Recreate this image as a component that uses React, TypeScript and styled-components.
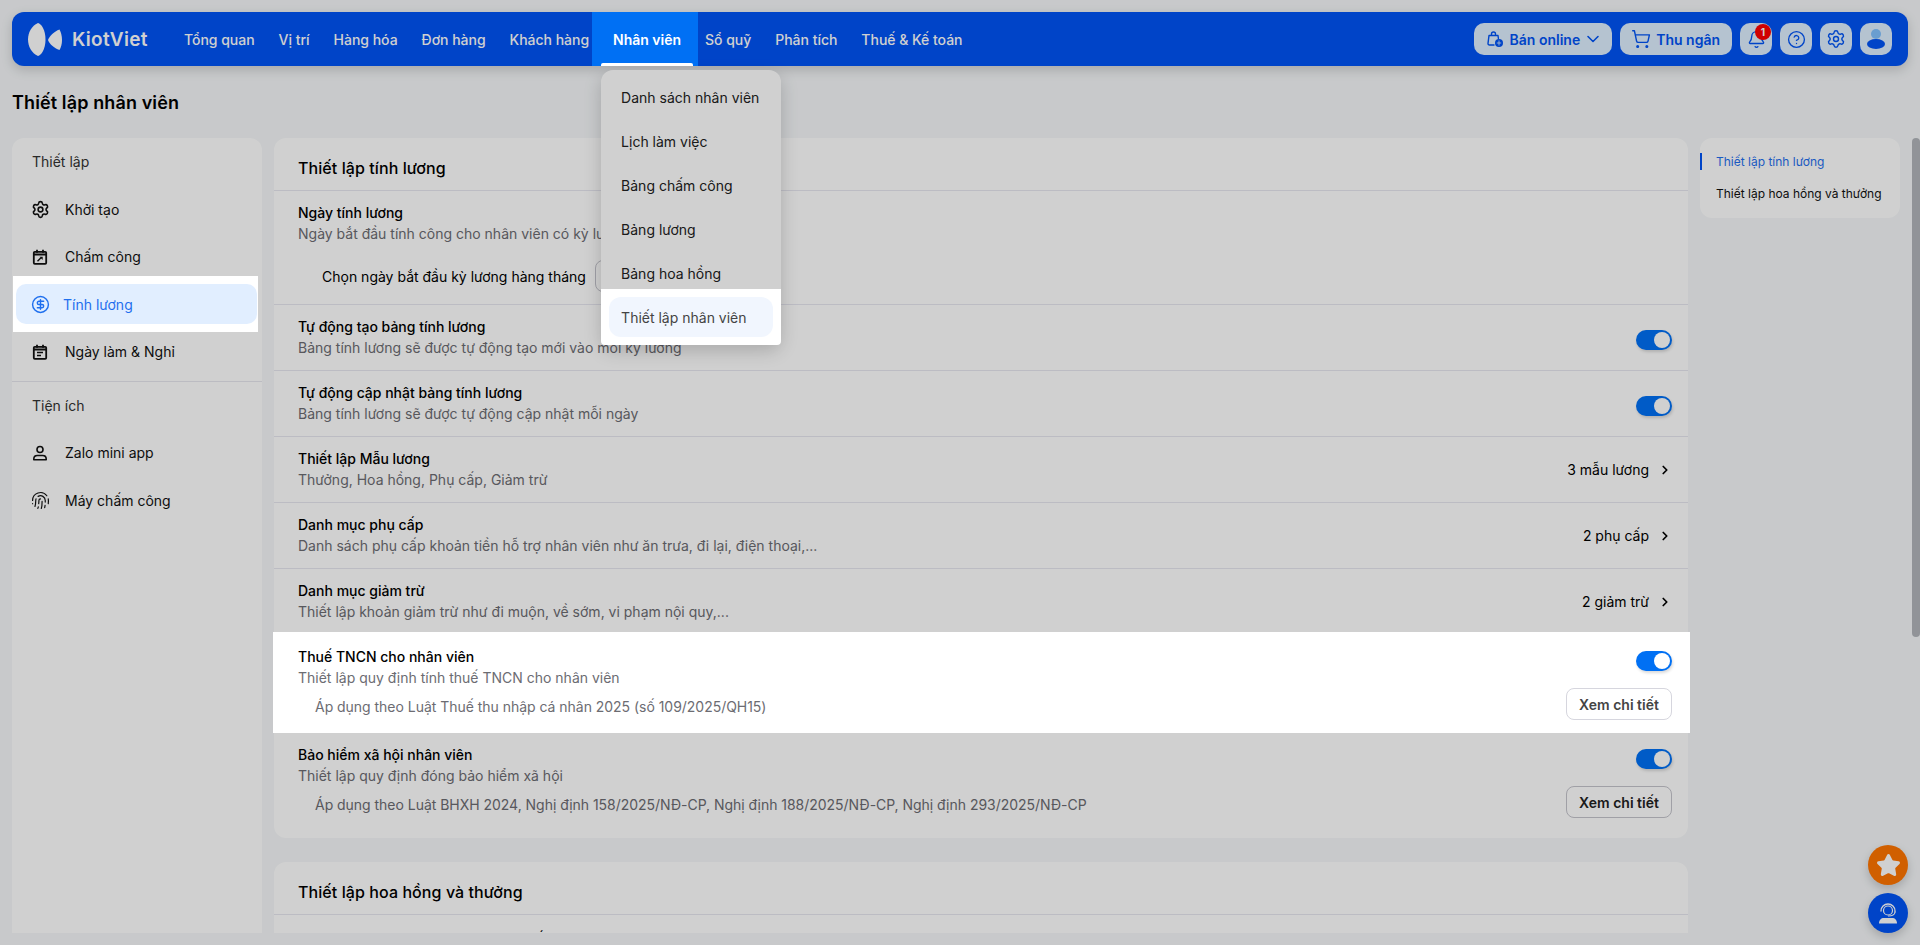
import React from 'react';
import styled, { createGlobalStyle } from 'styled-components';
import {
  Bell,
  ChevronDown,
  ChevronRight,
  CircleDollarSign,
  CircleHelp,
  Fingerprint,
  Settings,
  ShoppingCart,
  Star,
} from 'lucide-react';

const GlobalStyle = createGlobalStyle`
  html, body {
    margin: 0;
    height: 100%;
    overflow: hidden;
    background: #f5f7f9;
    color: #000;
    font-family: Inter, "Noto Sans", sans-serif;
    font-size: 14px;
  }
  * { box-sizing: border-box; }
`;

const Page = styled.div`
  height: 945px;
  padding: 12px;
  display: flex;
  flex-direction: column;
`;

const Overlay = styled.div`
  position: fixed;
  inset: 0;
  z-index: 10;
  background: rgba(0, 0, 0, 0.185);
`;

const Header = styled.header`
  height: 54px;
  flex: none;
  display: flex;
  align-items: center;
  padding: 0 16px;
  border-radius: 12px;
  background: #0054f6;
  box-shadow: 0 4px 12px rgba(0, 0, 0, 0.16);
`;

const Logo = styled.div`
  width: 144px;
  flex: none;
  display: flex;
  align-items: center;
  gap: 10px;
`;

const LogoText = styled.span`
  color: #fff;
  font-size: 19px;
  font-weight: 600;
  letter-spacing: 0.3px;
`;

const Nav = styled.nav`
  display: flex;
  height: 100%;
`;

const NavItem = styled.div`
  position: relative;
  display: flex;
`;

const NavLink = styled.a<{ $active?: boolean }>`
  display: flex;
  align-items: center;
  padding: 0 12px;
  color: #fff;
  font-weight: ${(p) => (p.$active ? 600 : 500)};
  font-size: 14px;
  letter-spacing: -0.02px;
  white-space: nowrap;
  ${(p) =>
    p.$active &&
    `
    position: relative;
    z-index: 11;
    &::before {
      content: '';
      position: absolute;
      inset: 0 -5px 0 -9px;
      z-index: -1;
      background: #0070f4;
    }
    &::after {
      content: '';
      position: absolute;
      left: 0;
      right: 0;
      bottom: 0;
      height: 3px;
      border-radius: 2px 2px 0 0;
      background: #fff;
    }
  `}
`;

const Dropdown = styled.div`
  position: absolute;
  top: 58px;
  left: 0;
  width: 180px;
  padding: 7px 8px 8px;
  display: flex;
  flex-direction: column;
  gap: 4px;
  border-radius: 12px;
  background: #fff;
  box-shadow: 0 6px 18px rgba(0, 0, 0, 0.18);
`;

const DropdownItem = styled.a<{ $active?: boolean }>`
  height: 40px;
  display: flex;
  align-items: center;
  padding: 0 12px;
  border-radius: 12px;
  color: #222;
  font-size: 14px;
  white-space: nowrap;
  ${(p) =>
    p.$active &&
    `
    position: relative;
    z-index: 11;
    color: #444;
    &::before {
      content: '';
      position: absolute;
      inset: -8px -8px -8px -8px;
      z-index: -2;
      border-radius: 0 0 4px 4px;
      background: #fff;
    }
    &::after {
      content: '';
      position: absolute;
      inset: 0;
      z-index: -1;
      border-radius: 12px;
      background: #f1f6fe;
    }
  `}
`;

const Actions = styled.div`
  margin-left: auto;
  display: flex;
  gap: 8px;
`;

const ActionButton = styled.button<{ $square?: boolean }>`
  position: relative;
  height: 32px;
  width: ${(p) => (p.$square ? '32px' : 'auto')};
  padding: ${(p) => (p.$square ? '0' : '0 12px')};
  display: flex;
  align-items: center;
  justify-content: center;
  gap: 6px;
  border: 0;
  border-radius: 10px;
  background: #deefff;
  color: #0054f6;
  font: 600 14px Inter, sans-serif;
`;

const ButtonIcon = styled.span<{ $slot: number }>`
  width: ${(p) => p.$slot}px;
  height: 20px;
  flex: none;
  display: flex;
  align-items: center;
  justify-content: center;
`;

const Badge = styled.span`
  position: absolute;
  top: 1px;
  right: 1px;
  width: 16px;
  height: 16px;
  display: flex;
  align-items: center;
  justify-content: center;
  border-radius: 50%;
  background: #ff0000;
  color: #fff;
  font-size: 10px;
  font-weight: 700;
`;

const PageTitle = styled.h1`
  margin: 25px 0 23px;
  height: 24px;
  font-size: 18px;
  line-height: 24px;
  font-weight: 600;
  letter-spacing: 0.12px;
`;

const Content = styled.div`
  flex: 1;
  min-height: 0;
  display: flex;
  gap: 12px;
  padding-right: 8px;
`;

const Sidebar = styled.aside`
  width: 250px;
  flex: none;
  padding-top: 14px;
  border-radius: 12px 12px 0 0;
  background: #fff;
`;

const SideLabel = styled.div`
  padding-left: 20px;
  margin-bottom: 17px;
  line-height: 20px;
  color: #333;
`;

const SideList = styled.div`
  display: flex;
  flex-direction: column;
  gap: 7.6px;
  margin: 0 5px 0 4px;
`;

const SideIcon = styled.span`
  width: 16px;
  height: 16px;
  flex: none;
  display: flex;
  align-items: center;
  justify-content: center;
`;

const SideItem = styled.a<{ $active?: boolean }>`
  height: 40px;
  display: flex;
  align-items: center;
  gap: ${(p) => (p.$active ? '15px' : '17px')};
  padding: 0 16px;
  border-radius: 10px;
  color: #111;
  font-size: 14px;
  ${(p) =>
    p.$active &&
    `
    position: relative;
    z-index: 11;
    color: #1f6fee;
    &::before {
      content: '';
      position: absolute;
      inset: -8px -1px -8px -3px;
      z-index: -2;
      background: #fff;
    }
    &::after {
      content: '';
      position: absolute;
      inset: 0;
      z-index: -1;
      border-radius: 10px;
      background: #e1eeff;
    }
  `}
`;

const SideDivider = styled.div`
  height: 1px;
  margin: 9px 0 14px;
  background: #e7e7ee;
`;

const Column = styled.main`
  flex: 1;
  min-width: 0;
  margin: 0 -2px;
  padding: 0 2px;
  overflow: hidden;
  display: flex;
  flex-direction: column;
  gap: 24px;
`;

const Panel = styled.section`
  flex: none;
  padding-bottom: 8px;
  border-radius: 12px;
  background: #fff;
`;

const PanelTitle = styled.h2`
  margin: 0;
  padding: 20px 24px 12px 24px;
  font-size: 16px;
  line-height: 20px;
  font-weight: 500;
  letter-spacing: 0.08px;
`;

const Row = styled.div<{ $spot?: boolean }>`
  border-top: 1px solid #e7e7f0;
  padding: 12px 16px 12px 24px;
  ${(p) =>
    p.$spot &&
    `
    position: relative;
    z-index: 11;
    &::before {
      content: '';
      position: absolute;
      inset: -3px -2px -1px -1px;
      z-index: -1;
      background: #fff;
    }
  `}
`;

const ClippedRow = styled(Row)`
  padding-top: 14px;
`;

const RowHead = styled.div<{ $top?: boolean }>`
  display: flex;
  justify-content: space-between;
  align-items: ${(p) => (p.$top ? 'flex-start' : 'center')};
`;

const RowTitle = styled.div`
  font-size: 14px;
  font-weight: 500;
  line-height: 20px;
`;

const RowDesc = styled.div`
  margin-top: 1px;
  line-height: 20px;
  color: #6c6c72;
`;

const Switch = styled.span`
  width: 36px;
  height: 20px;
  margin-top: 4px;
  display: flex;
  justify-content: flex-end;
  align-items: center;
  padding-right: 2px;
  border-radius: 10px;
  background: #0070f4;
  box-shadow: 1px 2px 3px rgba(0, 0, 0, 0.15);
  &::after {
    content: '';
    width: 16px;
    height: 16px;
    border-radius: 50%;
    background: #fff;
  }
`;

const RowValue = styled.div`
  display: flex;
  align-items: center;
  gap: 9px;
`;

const NoteRow = styled.div`
  display: flex;
  justify-content: space-between;
  align-items: center;
  height: 32px;
  padding-left: 17px;
  color: #6c6c72;
  letter-spacing: -0.03px;
`;

const NoteText = styled.span`
  padding-top: 5px;
`;

const DetailButton = styled.button<{ $light?: boolean }>`
  width: 106px;
  height: 32px;
  border: 1px solid ${(p) => (p.$light ? '#d6d6de' : '#c4c4cc')};
  border-radius: 8px;
  background: transparent;
  color: ${(p) => (p.$light ? '#444' : '#222')};
  font: 600 14px Inter, sans-serif;
`;

const StartRow = styled.div`
  margin-top: 16px;
  display: flex;
  align-items: center;
  gap: 9px;
  padding-left: 24px;
`;

const SelectBox = styled.div`
  width: 120px;
  height: 32px;
  border: 1px solid #c4c4cc;
  border-radius: 8px;
`;

const Aside = styled.aside`
  width: 200px;
  height: 80px;
  flex: none;
  padding: 14px 0;
  display: flex;
  flex-direction: column;
  gap: 12px;
  border-radius: 12px;
  background: #fff;
`;

const AsideLink = styled.a<{ $active?: boolean }>`
  position: relative;
  padding-left: 16px;
  line-height: 20px;
  font-size: 12px;
  white-space: nowrap;
  color: ${(p) => (p.$active ? '#1f6fee' : '#111')};
  ${(p) =>
    p.$active &&
    `
    &::before {
      content: '';
      position: absolute;
      left: 0;
      top: 1px;
      width: 2px;
      height: 17px;
      background: #0054f6;
    }
  `}
`;

const ScrollThumb = styled.div`
  position: fixed;
  top: 138px;
  right: 0;
  width: 8px;
  height: 499px;
  border-radius: 4px;
  background: #b2b5bb;
`;

const Fabs = styled.div`
  position: fixed;
  right: 12px;
  bottom: 12px;
  display: flex;
  flex-direction: column;
  gap: 8px;
`;

const Fab = styled.div<{ $color: string }>`
  width: 40px;
  height: 40px;
  display: flex;
  align-items: center;
  justify-content: center;
  border-radius: 50%;
  background: ${(p) => p.$color};
  box-shadow: 0 4px 10px rgba(0, 0, 0, 0.18);
`;

const LogoMark = () => (
  <svg width="34" height="33" viewBox="0 0 34 33" fill="#fff">
    <path d="M10 0C3.500 3 0 9.500 0 16.500S3.500 30 10 33c3-.5 7.500-6.500 7.500-16.500S13 .5 10 0Z" />
    <path d="M20 17c1.500-4 6-8.500 11.500-10.500C33 9 34 13 34 17s-1 7.500-2.500 10C26 25 21.500 21 20 17Z" />
  </svg>
);

const BagIcon = () => (
  <svg width="18" height="18" viewBox="0 0 18 18" fill="none" stroke="currentColor" strokeWidth="1.4">
    <path d="M8 15H3.500a1.500 1.500 0 0 1-1.500-1.700L3 5.500h9l.4 3" strokeLinecap="round" strokeLinejoin="round" />
    <path d="M5.500 5.500V4a2 2 0 0 1 4 0v1.500" />
    <circle cx="13" cy="13" r="4" fill="currentColor" stroke="none" />
    <path d="M13 10.500v5M10.800 13h4.400" stroke="#deefff" strokeWidth="0.8" />
  </svg>
);

const CalendarEditIcon = () => (
  <svg width="16" height="16" viewBox="0 0 16 16" fill="none" stroke="currentColor" strokeWidth="1.8">
    <rect x="1.800" y="2.800" width="12.400" height="12" rx="1" />
    <path d="M1.800 5.500h12.400" strokeWidth="2" />
    <path d="M5 .8v3M11 .8v3" />
    <path d="M5.500 12.200l3.500-3.500" strokeWidth="1.500" />
    <path d="M7.500 7.700h3.200v3.200z" fill="currentColor" stroke="none" />
  </svg>
);

const CalendarListIcon = () => (
  <svg width="16" height="16" viewBox="0 0 16 16" fill="none" stroke="currentColor" strokeWidth="1.8">
    <rect x="1.800" y="2.800" width="12.400" height="12" rx="1" />
    <path d="M1.800 5.500h12.400" strokeWidth="2" />
    <path d="M5 .8v3M11 .8v3" />
    <path d="M5 8.500h6M5 11.500h4" strokeWidth="1.300" />
  </svg>
);

const PersonIcon = () => (
  <svg width="16" height="16" viewBox="0 0 16 16" fill="none" stroke="currentColor" strokeWidth="1.6">
    <circle cx="8" cy="4.500" r="3" />
    <path d="M1.800 14.800v-.8c0-2 1.500-3.500 3.500-3.500h5.400c2 0 3.500 1.500 3.500 3.500v.8z" strokeLinejoin="round" />
  </svg>
);

const AvatarIcon = () => (
  <svg width="24" height="24" viewBox="0 0 24 24">
    <circle cx="12" cy="7" r="5" fill="#82c2ff" />
    <ellipse cx="12" cy="17" rx="9" ry="5" fill="#0054f6" />
  </svg>
);

const HeadsetIcon = () => (
  <svg width="24" height="24" viewBox="0 0 24 24" fill="none" stroke="#fff" strokeLinecap="round">
    <path d="M5 10a7 7 0 0 1 14 0v1" strokeWidth="1.300" />
    <circle cx="12" cy="9.500" r="4.500" strokeWidth="1.200" />
    <path d="M19 11c0 2.500-3 4-6.500 4" strokeWidth="1.100" />
    <path d="M3 22.500c0-3.500 2-5.500 5-5.500h8c3 0 5 2 5 5.500z" fill="#fff" stroke="none" />
  </svg>
);

const navItems = ['Tổng quan', 'Vị trí', 'Hàng hóa', 'Đơn hàng', 'Khách hàng', 'Nhân viên', 'Sổ quỹ', 'Phân tích', 'Thuế & Kế toán'];
const menuItems = ['Danh sách nhân viên', 'Lịch làm việc', 'Bảng chấm công', 'Bảng lương', 'Bảng hoa hồng'];

const simpleRows: { title: string; desc: string; value?: string }[] = [
  { title: 'Tự động tạo bảng tính lương', desc: 'Bảng tính lương sẽ được tự động tạo mới vào mỗi kỳ lương' },
  { title: 'Tự động cập nhật bảng tính lương', desc: 'Bảng tính lương sẽ được tự động cập nhật mỗi ngày' },
  { title: 'Thiết lập Mẫu lương', desc: 'Thưởng, Hoa hồng, Phụ cấp, Giảm trừ', value: '3 mẫu lương' },
  { title: 'Danh mục phụ cấp', desc: 'Danh sách phụ cấp khoản tiền hỗ trợ nhân viên như ăn trưa, đi lại, điện thoại,...', value: '2 phụ cấp' },
  { title: 'Danh mục giảm trừ', desc: 'Thiết lập khoản giảm trừ như đi muộn, về sớm, vi phạm nội quy,...', value: '2 giảm trừ' },
];

const App: React.FC = () => {
  return (
    <Page>
      <GlobalStyle />
      <Header>
        <Logo>
          <LogoMark />
          <LogoText>KiotViet</LogoText>
        </Logo>
        <Nav>
          {navItems.map((item) => (
            <NavItem key={item}>
              <NavLink $active={item === 'Nhân viên'}>{item}</NavLink>
              {item === 'Nhân viên' && (
                <Dropdown>
                  {menuItems.map((m) => (
                    <DropdownItem key={m}>{m}</DropdownItem>
                  ))}
                  <DropdownItem $active>Thiết lập nhân viên</DropdownItem>
                </Dropdown>
              )}
            </NavItem>
          ))}
        </Nav>
        <Actions>
          <ActionButton>
            <BagIcon />
            Bán online
            <ButtonIcon $slot={14}>
              <ChevronDown size={20} strokeWidth={1.9} style={{ flex: 'none' }} />
            </ButtonIcon>
          </ActionButton>
          <ActionButton>
            <ButtonIcon $slot={18}>
              <ShoppingCart size={20} strokeWidth={1.7} style={{ flex: 'none' }} />
            </ButtonIcon>
            Thu ngân
          </ActionButton>
          <ActionButton $square>
            <Bell size={19} strokeWidth={1.7} />
            <Badge>1</Badge>
          </ActionButton>
          <ActionButton $square>
            <CircleHelp size={19} strokeWidth={1.7} />
          </ActionButton>
          <ActionButton $square>
            <Settings size={20} strokeWidth={1.7} />
          </ActionButton>
          <ActionButton $square>
            <AvatarIcon />
          </ActionButton>
        </Actions>
      </Header>

      <PageTitle>Thiết lập nhân viên</PageTitle>

      <Content>
        <Sidebar>
          <SideLabel>Thiết lập</SideLabel>
          <SideList>
            <SideItem>
              <SideIcon>
                <Settings size={19} strokeWidth={2} style={{ flex: 'none' }} />
              </SideIcon>
              Khởi tạo
            </SideItem>
            <SideItem>
              <SideIcon>
                <CalendarEditIcon />
              </SideIcon>
              Chấm công
            </SideItem>
            <SideItem $active>
              <SideIcon>
                <CircleDollarSign size={19} strokeWidth={1.8} style={{ flex: 'none' }} />
              </SideIcon>
              Tính lương
            </SideItem>
            <SideItem>
              <SideIcon>
                <CalendarListIcon />
              </SideIcon>
              Ngày làm &amp; Nghỉ
            </SideItem>
          </SideList>
          <SideDivider />
          <SideLabel>Tiện ích</SideLabel>
          <SideList>
            <SideItem>
              <SideIcon>
                <PersonIcon />
              </SideIcon>
              Zalo mini app
            </SideItem>
            <SideItem>
              <SideIcon>
                <Fingerprint size={19} strokeWidth={1.5} style={{ flex: 'none' }} />
              </SideIcon>
              Máy chấm công
            </SideItem>
          </SideList>
        </Sidebar>

        <Column>
          <Panel>
            <PanelTitle>Thiết lập tính lương</PanelTitle>
            <Row>
              <RowTitle>Ngày tính lương</RowTitle>
              <RowDesc>Ngày bắt đầu tính công cho nhân viên có kỳ lương hàng tháng</RowDesc>
              <StartRow>
                Chọn ngày bắt đầu kỳ lương hàng tháng
                <SelectBox />
              </StartRow>
            </Row>
            {simpleRows.map((row) => (
              <Row key={row.title}>
                <RowHead>
                  <div>
                    <RowTitle>{row.title}</RowTitle>
                    <RowDesc>{row.desc}</RowDesc>
                  </div>
                  {row.value ? (
                    <RowValue>
                      {row.value}
                      <ChevronRight size={14} strokeWidth={3} />
                    </RowValue>
                  ) : (
                    <Switch />
                  )}
                </RowHead>
              </Row>
            ))}
            <Row $spot>
              <RowHead $top>
                <div>
                  <RowTitle>Thuế TNCN cho nhân viên</RowTitle>
                  <RowDesc>Thiết lập quy định tính thuế TNCN cho nhân viên</RowDesc>
                </div>
                <Switch />
              </RowHead>
              <NoteRow>
                <NoteText>Áp dụng theo Luật Thuế thu nhập cá nhân 2025 (số 109/2025/QH15)</NoteText>
                <DetailButton $light>Xem chi tiết</DetailButton>
              </NoteRow>
            </Row>
            <Row>
              <RowHead $top>
                <div>
                  <RowTitle>Bảo hiểm xã hội nhân viên</RowTitle>
                  <RowDesc>Thiết lập quy định đóng bảo hiểm xã hội</RowDesc>
                </div>
                <Switch />
              </RowHead>
              <NoteRow>
                <NoteText>Áp dụng theo Luật BHXH 2024, Nghị định 158/2025/NĐ-CP, Nghị định 188/2025/NĐ-CP, Nghị định 293/2025/NĐ-CP</NoteText>
                <DetailButton>Xem chi tiết</DetailButton>
              </NoteRow>
            </Row>
          </Panel>
          <Panel>
            <PanelTitle>Thiết lập hoa hồng và thưởng</PanelTitle>
            <ClippedRow>
              <RowTitle>Khi lương nhân viên vào làm một thiết lập</RowTitle>
            </ClippedRow>
          </Panel>
        </Column>

        <Aside>
          <AsideLink $active>Thiết lập tính lương</AsideLink>
          <AsideLink>Thiết lập hoa hồng và thưởng</AsideLink>
        </Aside>
      </Content>

      <ScrollThumb />
      <Fabs>
        <Fab $color="#ff7500">
          <Star size={25} fill="#fff" color="#fff" />
        </Fab>
        <Fab $color="#0054f6">
          <HeadsetIcon />
        </Fab>
      </Fabs>
      <Overlay />
    </Page>
  );
};

export default App;
